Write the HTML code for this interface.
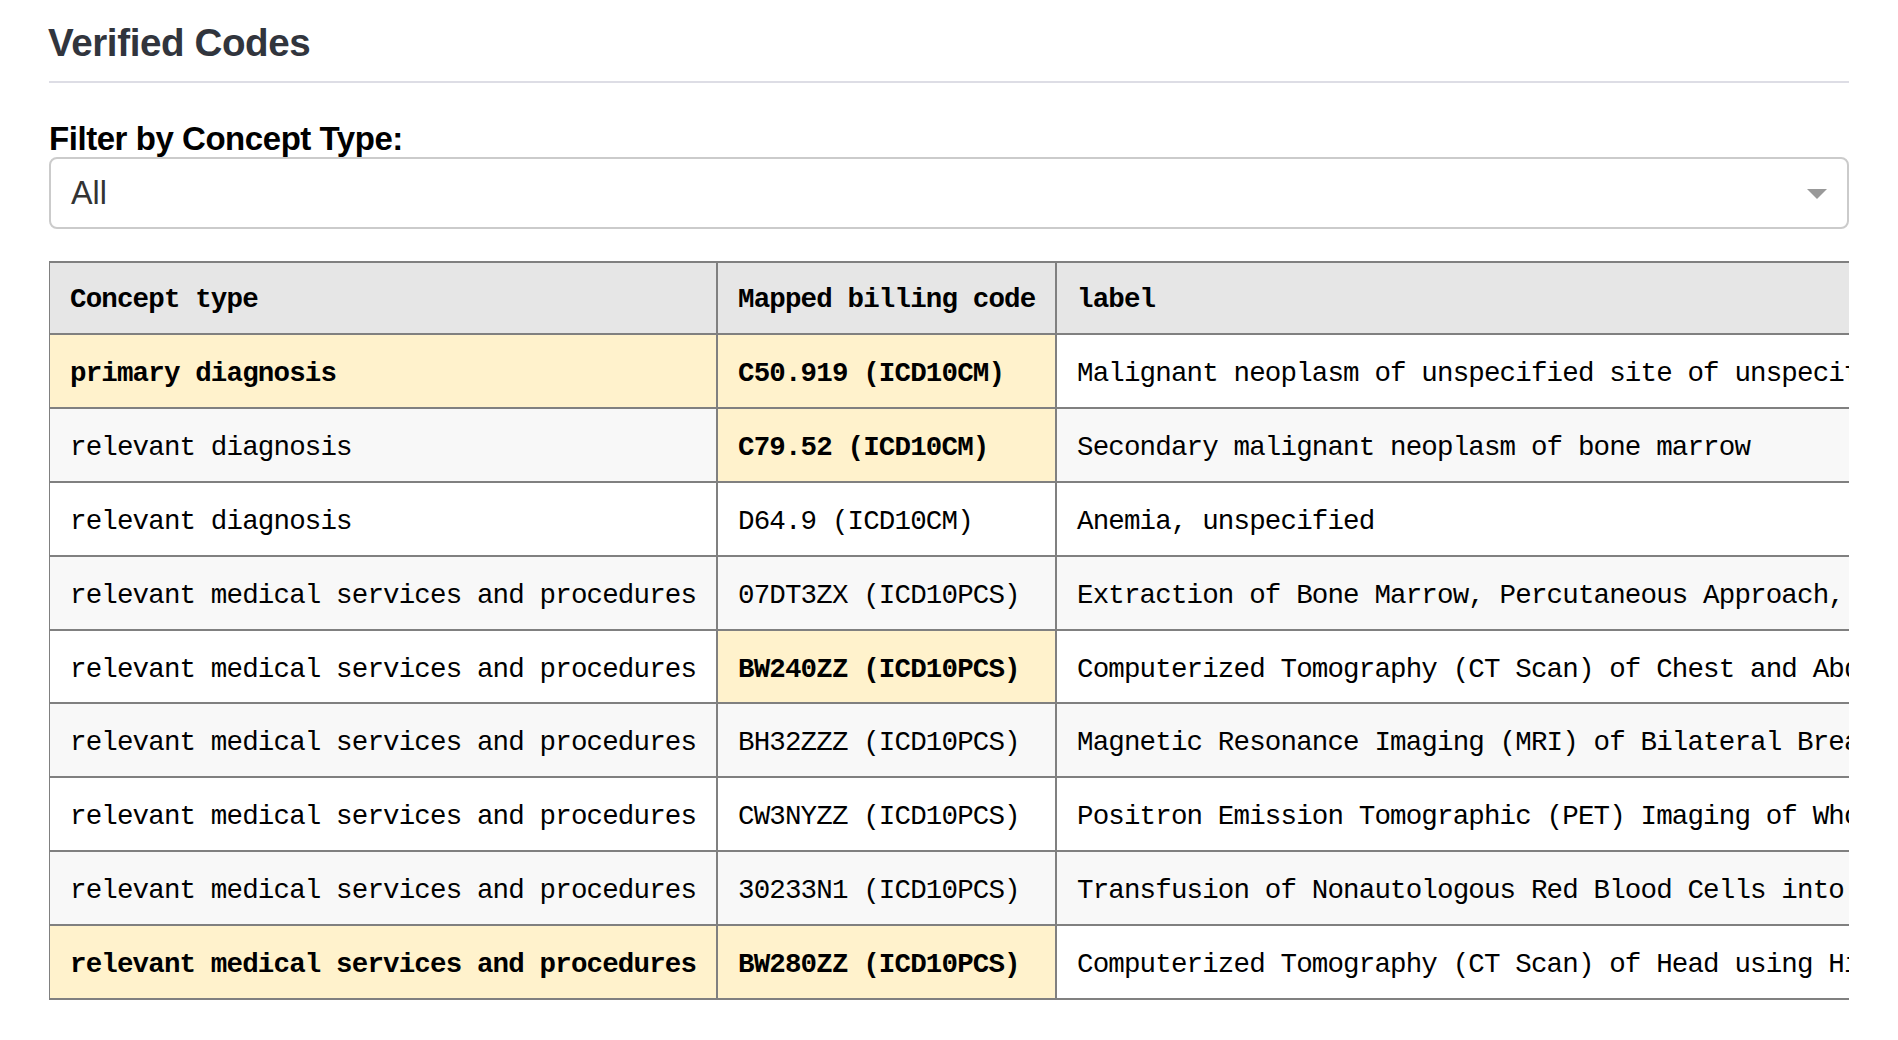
<!DOCTYPE html>
<html><head><meta charset="utf-8">
<style>
html,body{margin:0;padding:0;background:#fff;}
body{width:1898px;height:1040px;overflow:hidden;position:relative;font-family:"Liberation Sans",sans-serif;}
#title{position:absolute;left:48px;top:20px;margin:0;font-size:38.6px;letter-spacing:-0.4px;font-weight:bold;color:#31353d;line-height:46px;white-space:nowrap;}
#hr{position:absolute;left:49px;top:81px;width:1800px;height:2px;background:#dddde5;}
#lbl{position:absolute;left:49px;top:120px;font-size:33px;letter-spacing:-0.45px;font-weight:bold;color:#000;line-height:38px;white-space:nowrap;}
#sel{position:absolute;left:49px;top:157px;width:1796px;height:68px;border:2px solid #cbcbcb;border-radius:8px;background:#fff;}
#sel span{position:absolute;left:20px;top:15px;font-size:32.3px;line-height:38px;color:#333;}
#tri{position:absolute;left:1756px;top:30px;width:0;height:0;border-left:10px solid transparent;border-right:10px solid transparent;border-top:10px solid #999;}
#tb{position:absolute;left:0;top:0;width:1898px;height:1040px;}
#tb div{position:absolute;}
#tb .t{font-family:"Liberation Mono",monospace;font-size:27.5px;line-height:27.5px;letter-spacing:-0.85px;color:#000;white-space:nowrap;}
#tb .b{font-weight:bold;}
#clip{position:absolute;left:0;top:0;width:1849px;height:1040px;overflow:hidden;}
</style></head><body>
<h3 id="title">Verified Codes</h3>
<div id="hr"></div>
<div id="lbl">Filter by Concept Type:</div>
<div id="sel"><span>All</span><div id="tri"></div></div>
<div id="clip"><div id="tb">
<div style="left:50px;top:263px;width:666px;height:70px;background:#e6e6e6"></div>
<div style="left:718px;top:263px;width:337px;height:70px;background:#e6e6e6"></div>
<div style="left:1057px;top:263px;width:792px;height:70px;background:#e6e6e6"></div>
<div style="left:50px;top:335px;width:666px;height:72px;background:#fff2cc"></div>
<div style="left:718px;top:335px;width:337px;height:72px;background:#fff2cc"></div>
<div style="left:50px;top:409px;width:666px;height:72px;background:#f8f8f8"></div>
<div style="left:718px;top:409px;width:337px;height:72px;background:#fff2cc"></div>
<div style="left:1057px;top:409px;width:792px;height:72px;background:#f8f8f8"></div>
<div style="left:50px;top:557px;width:666px;height:72px;background:#f8f8f8"></div>
<div style="left:718px;top:557px;width:337px;height:72px;background:#f8f8f8"></div>
<div style="left:1057px;top:557px;width:792px;height:72px;background:#f8f8f8"></div>
<div style="left:718px;top:631px;width:337px;height:71px;background:#fff2cc"></div>
<div style="left:50px;top:704px;width:666px;height:72px;background:#f8f8f8"></div>
<div style="left:718px;top:704px;width:337px;height:72px;background:#f8f8f8"></div>
<div style="left:1057px;top:704px;width:792px;height:72px;background:#f8f8f8"></div>
<div style="left:50px;top:852px;width:666px;height:72px;background:#f8f8f8"></div>
<div style="left:718px;top:852px;width:337px;height:72px;background:#f8f8f8"></div>
<div style="left:1057px;top:852px;width:792px;height:72px;background:#f8f8f8"></div>
<div style="left:50px;top:926px;width:666px;height:72px;background:#fff2cc"></div>
<div style="left:718px;top:926px;width:337px;height:72px;background:#fff2cc"></div>
<div style="left:49px;top:261px;width:1800px;height:2px;background:#808080"></div>
<div style="left:49px;top:333px;width:1800px;height:2px;background:#808080"></div>
<div style="left:49px;top:407px;width:1800px;height:2px;background:#808080"></div>
<div style="left:49px;top:481px;width:1800px;height:2px;background:#808080"></div>
<div style="left:49px;top:555px;width:1800px;height:2px;background:#808080"></div>
<div style="left:49px;top:629px;width:1800px;height:2px;background:#808080"></div>
<div style="left:49px;top:702px;width:1800px;height:2px;background:#808080"></div>
<div style="left:49px;top:776px;width:1800px;height:2px;background:#808080"></div>
<div style="left:49px;top:850px;width:1800px;height:2px;background:#808080"></div>
<div style="left:49px;top:924px;width:1800px;height:2px;background:#808080"></div>
<div style="left:49px;top:998px;width:1800px;height:2px;background:#808080"></div>
<div style="left:49px;top:261px;width:1px;height:739px;background:#808080"></div>
<div style="left:716px;top:261px;width:2px;height:739px;background:#808080"></div>
<div style="left:1055px;top:261px;width:2px;height:739px;background:#808080"></div>
<div class="t b" style="left:70px;top:285.93px">Concept type</div>
<div class="t b" style="left:738px;top:285.93px">Mapped billing code</div>
<div class="t b" style="left:1077px;top:285.93px">label</div>
<div class="t b" style="left:70px;top:359.93px">primary diagnosis</div>
<div class="t b" style="left:738px;top:359.93px">C50.919 (ICD10CM)</div>
<div class="t" style="left:1077px;top:359.93px">Malignant neoplasm of unspecified site of unspecified female breast</div>
<div class="t" style="left:70px;top:433.93px">relevant diagnosis</div>
<div class="t b" style="left:738px;top:433.93px">C79.52 (ICD10CM)</div>
<div class="t" style="left:1077px;top:433.93px">Secondary malignant neoplasm of bone marrow</div>
<div class="t" style="left:70px;top:507.93px">relevant diagnosis</div>
<div class="t" style="left:738px;top:507.93px">D64.9 (ICD10CM)</div>
<div class="t" style="left:1077px;top:507.93px">Anemia, unspecified</div>
<div class="t" style="left:70px;top:581.93px">relevant medical services and procedures</div>
<div class="t" style="left:738px;top:581.93px">07DT3ZX (ICD10PCS)</div>
<div class="t" style="left:1077px;top:581.93px">Extraction of Bone Marrow, Percutaneous Approach, Diagnostic</div>
<div class="t" style="left:70px;top:655.93px">relevant medical services and procedures</div>
<div class="t b" style="left:738px;top:655.93px">BW240ZZ (ICD10PCS)</div>
<div class="t" style="left:1077px;top:655.93px">Computerized Tomography (CT Scan) of Chest and Abdomen</div>
<div class="t" style="left:70px;top:728.93px">relevant medical services and procedures</div>
<div class="t" style="left:738px;top:728.93px">BH32ZZZ (ICD10PCS)</div>
<div class="t" style="left:1077px;top:728.93px">Magnetic Resonance Imaging (MRI) of Bilateral Breasts</div>
<div class="t" style="left:70px;top:802.93px">relevant medical services and procedures</div>
<div class="t" style="left:738px;top:802.93px">CW3NYZZ (ICD10PCS)</div>
<div class="t" style="left:1077px;top:802.93px">Positron Emission Tomographic (PET) Imaging of Whole Body</div>
<div class="t" style="left:70px;top:876.93px">relevant medical services and procedures</div>
<div class="t" style="left:738px;top:876.93px">30233N1 (ICD10PCS)</div>
<div class="t" style="left:1077px;top:876.93px">Transfusion of Nonautologous Red Blood Cells into Peripheral Vein, Percutaneous Approach</div>
<div class="t b" style="left:70px;top:950.93px">relevant medical services and procedures</div>
<div class="t b" style="left:738px;top:950.93px">BW280ZZ (ICD10PCS)</div>
<div class="t" style="left:1077px;top:950.93px">Computerized Tomography (CT Scan) of Head using High Osmolar Contrast</div>
</div></div>
</body></html>
